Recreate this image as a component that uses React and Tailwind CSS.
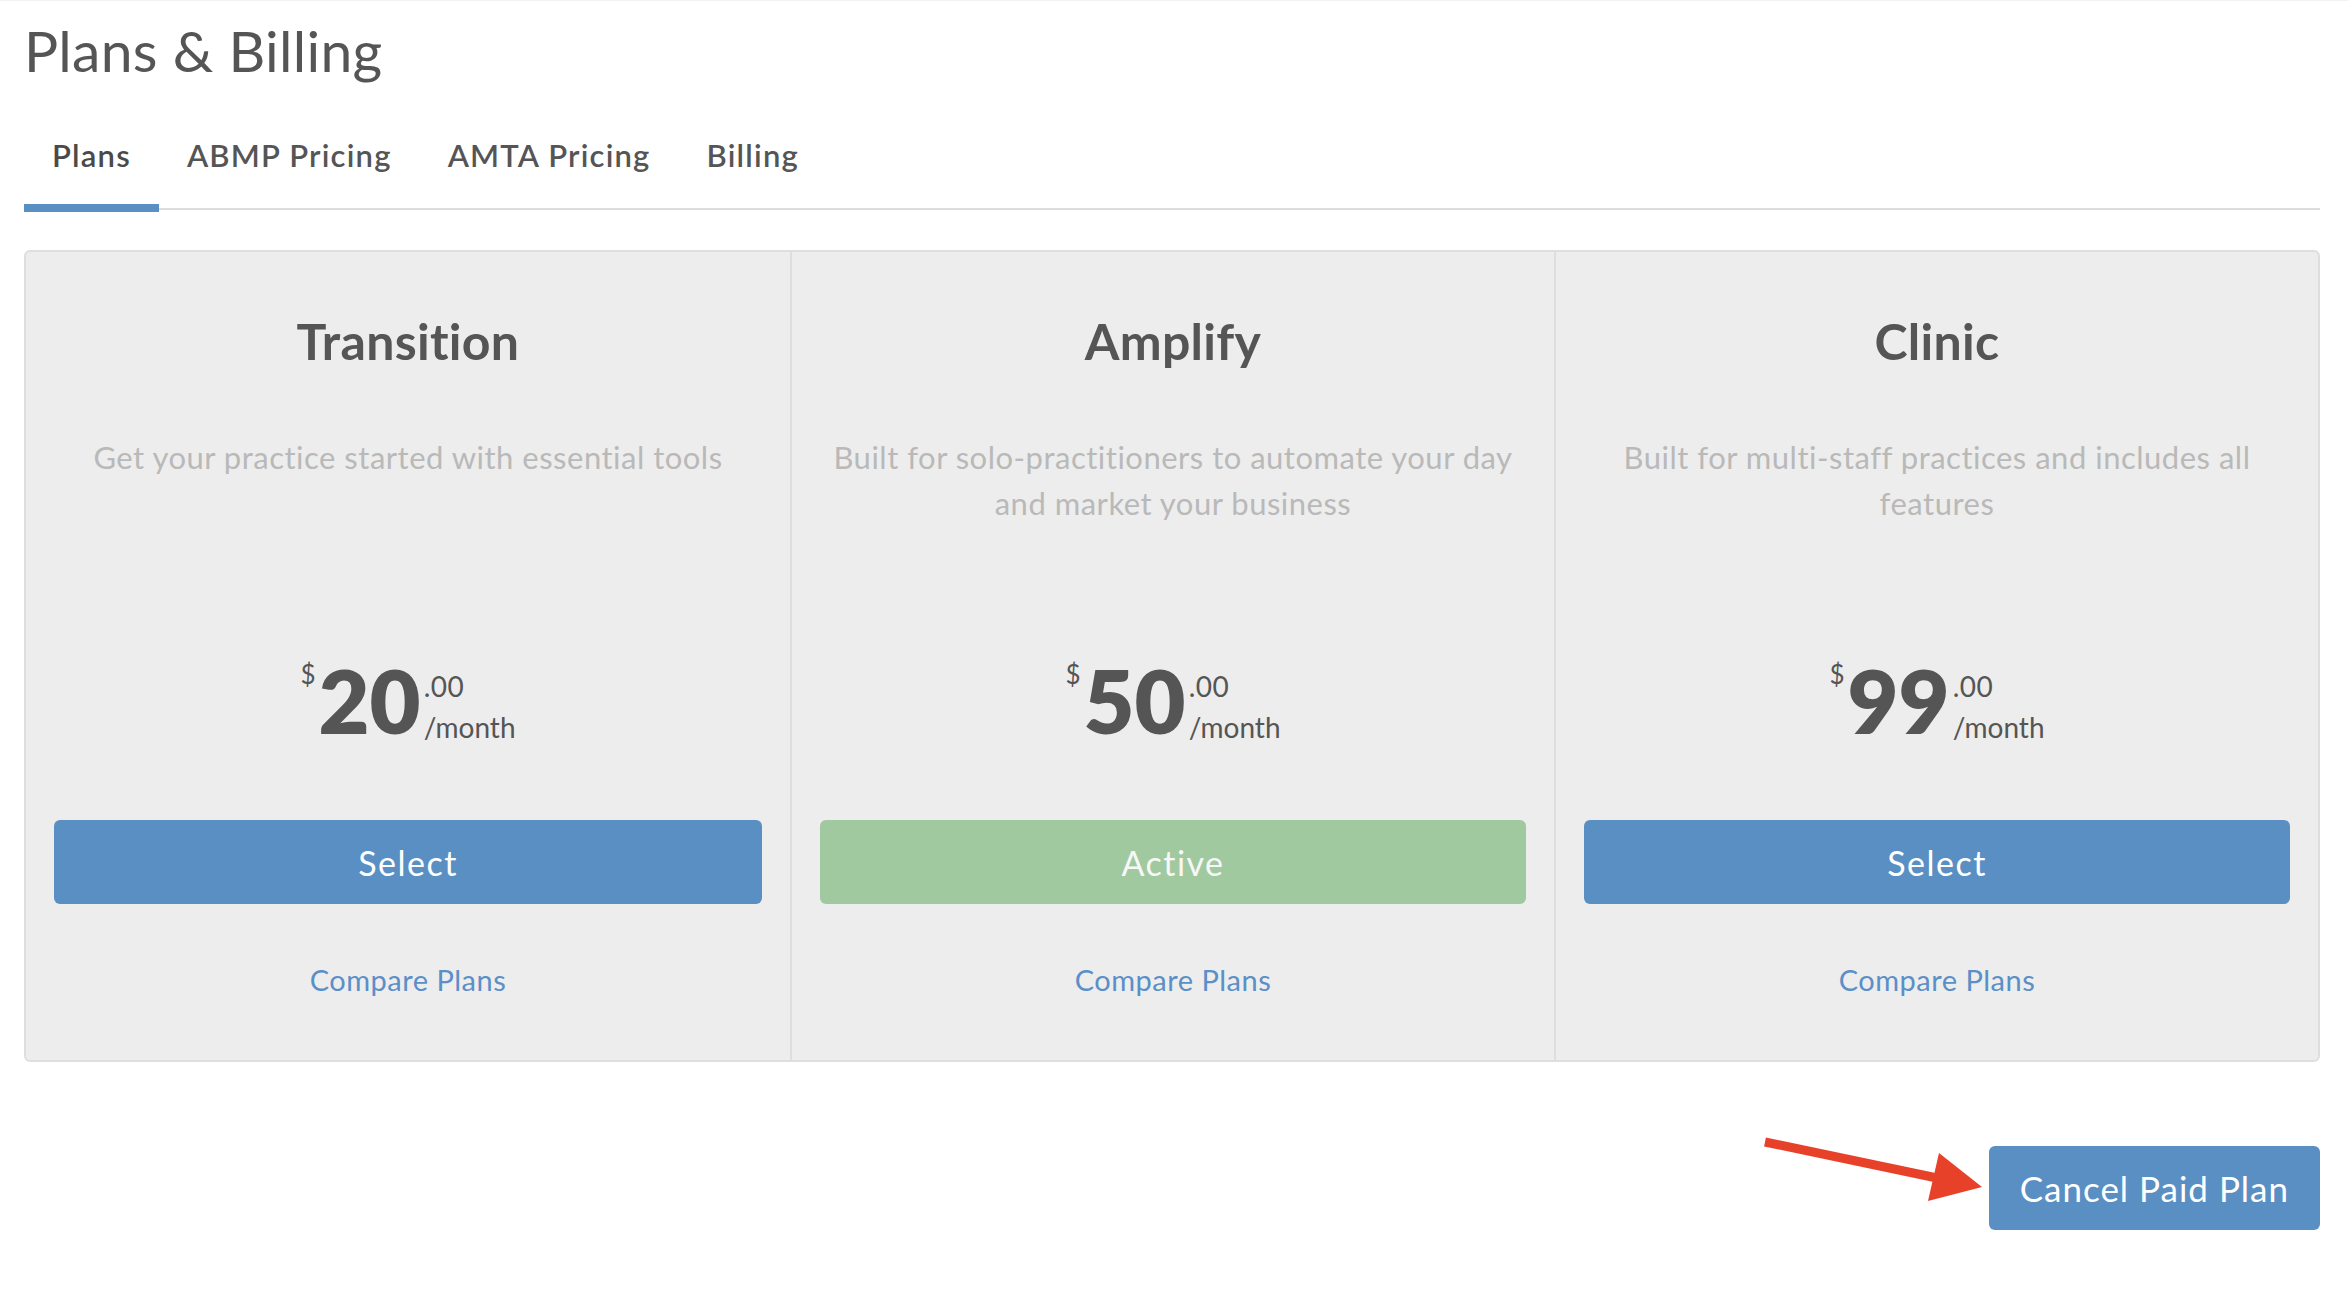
const plans = [
  {
    name: "Transition",
    desc: ["Get your practice started with essential tools"],
    price: "20",
    active: false,
  },
  {
    name: "Amplify",
    desc: ["Built for solo-practitioners to automate your day", "and market your business"],
    price: "50",
    active: true,
  },
  {
    name: "Clinic",
    desc: ["Built for multi-staff practices and includes all", "features"],
    price: "99",
    active: false,
  },
];

const tabs = ["Plans", "ABMP Pricing", "AMTA Pricing", "Billing"];

export default function App() {
  return (
    <div className="min-h-screen bg-white border-t border-[#f2f2f2] pl-[24px] pr-[28px] font-[Lato,'Liberation_Sans',sans-serif] text-[#555555]">
      <h1 className="pt-[21px] text-[57px] leading-none font-normal tracking-[0.3px] text-[#555555]">Plans &amp; Billing</h1>

      <div className="mt-[61px] flex border-b-2 border-[#dddddd]">
        {tabs.map((t, i) => (
          <div
            key={t}
            className={
              i === 0
                ? "px-[28px] pb-[33px] text-[31px] leading-none font-semibold tracking-[1.2px] text-[#4a4a4a] border-b-[8px] border-[#5a8fc4] -mb-[4px]"
                : "px-[28px] pb-[33px] text-[31px] leading-none font-semibold tracking-[1.2px] text-[#555555] border-b-[8px] border-transparent -mb-[4px]"
            }
          >
            {t}
          </div>
        ))}
      </div>

      <div className="mt-[40px] grid grid-cols-3 rounded-[6px] border-2 border-[#dedede] bg-[#ededed]">
        {plans.map((p, i) => (
          <div
            key={p.name}
            className={
              i === 0
                ? "flex flex-col items-center px-[28px] pt-[64px] pb-[66px]"
                : "flex flex-col items-center px-[28px] pt-[64px] pb-[66px] border-l-2 border-[#dedede]"
            }
          >
            <div className="text-[50px] leading-none font-bold tracking-[0.3px] text-[#555555]">{p.name}</div>
            <div className="mt-[68px] h-[92px] text-center text-[31px] leading-[46px] tracking-[0.5px] text-[#b9b9b9]">
              {p.desc.map((l) => (
                <div key={l}>{l}</div>
              ))}
            </div>
            <div className="mt-[130px] flex items-start text-[#555555]">
              <span className="mt-[5px] mr-[3px] text-[26px] leading-none">$</span>
              <span className="text-[88px] leading-none font-extrabold">{p.price}</span>
              <span className="ml-[3px] mt-[16px] flex flex-col gap-[13px] text-[28px] leading-none">
                <span className="tracking-[0.5px]">.00</span>
                <span>/month</span>
              </span>
            </div>
            <button
              className={
                p.active
                  ? "mt-[76px] flex h-[84px] w-full items-center justify-center rounded-[6px] bg-[#a1c9a0] text-[34px] tracking-[1.5px] text-[#f7f7f7]"
                  : "mt-[76px] flex h-[84px] w-full items-center justify-center rounded-[6px] bg-[#5a8fc4] text-[34px] tracking-[1.5px] text-white"
              }
            >
              {p.active ? "Active" : "Select"}
            </button>
            <a className="mt-[61px] text-[29px] leading-none tracking-[0.5px] text-[#5b8fc8]">Compare Plans</a>
          </div>
        ))}
      </div>

      <div className="mt-[84px] flex justify-end">
        <div className="relative">
          <svg
            className="absolute left-[-230px] top-[-15px]"
            width="230"
            height="80"
            viewBox="0 0 230 80"
          >
            <line x1="6" y1="11" x2="178" y2="47" stroke="#e8412a" strokeWidth="9" />
            <polygon points="180,22 223,56 169,70" fill="#e8412a" />
          </svg>
          <button className="flex h-[84px] items-center rounded-[6px] bg-[#5a8fc4] px-[31px] text-[35px] tracking-[1px] text-white">
            Cancel Paid Plan
          </button>
        </div>
      </div>
    </div>
  );
}
